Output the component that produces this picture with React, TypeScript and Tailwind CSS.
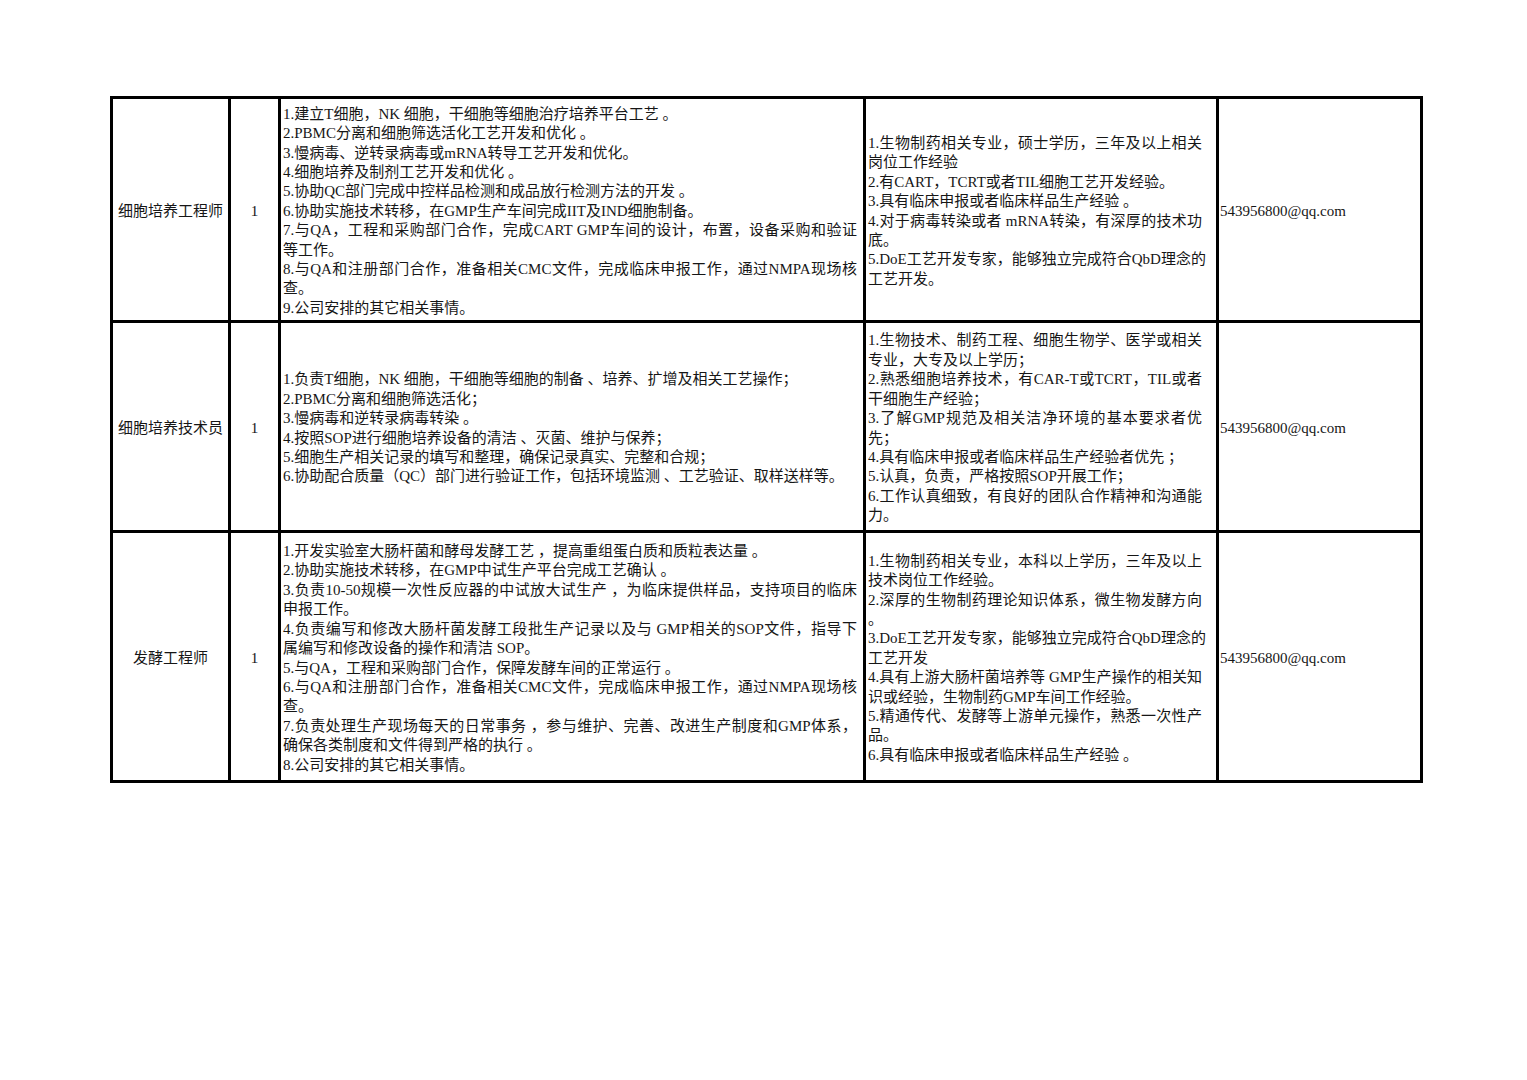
const rows = [
  {
    title: "细胞培养工程师",
    count: "1",
    duties: [
      ["1.建立T细胞，NK 细胞，干细胞等细胞治疗培养平台工艺 。"],
      ["2.PBMC分离和细胞筛选活化工艺开发和优化 。"],
      ["3.慢病毒、逆转录病毒或mRNA转导工艺开发和优化。"],
      ["4.细胞培养及制剂工艺开发和优化 。"],
      ["5.协助QC部门完成中控样品检测和成品放行检测方法的开发 。"],
      ["6.协助实施技术转移，在GMP生产车间完成IIT及IND细胞制备。"],
      ["7.与QA，工程和采购部门合作，完成CART GMP车间的设计，布置，设备采购和验证", "等工作。"],
      ["8.与QA和注册部门合作，准备相关CMC文件，完成临床申报工作，通过NMPA现场核", "查。"],
      ["9.公司安排的其它相关事情。"],
    ],
    reqs: [
      ["1.生物制药相关专业，硕士学历，三年及以上相关", "岗位工作经验"],
      ["2.有CART，TCRT或者TIL细胞工艺开发经验。"],
      ["3.具有临床申报或者临床样品生产经验 。"],
      ["4.对于病毒转染或者 mRNA转染，有深厚的技术功", "底。"],
      ["5.DoE工艺开发专家，能够独立完成符合QbD理念的", "工艺开发。"],
    ],
  },
  {
    title: "细胞培养技术员",
    count: "1",
    duties: [
      ["1.负责T细胞，NK 细胞，干细胞等细胞的制备 、培养、扩增及相关工艺操作；"],
      ["2.PBMC分离和细胞筛选活化；"],
      ["3.慢病毒和逆转录病毒转染 。"],
      ["4.按照SOP进行细胞培养设备的清洁 、灭菌、维护与保养；"],
      ["5.细胞生产相关记录的填写和整理，确保记录真实、完整和合规；"],
      ["6.协助配合质量（QC）部门进行验证工作，包括环境监测 、工艺验证、取样送样等。"],
    ],
    reqs: [
      ["1.生物技术、制药工程、细胞生物学、医学或相关", "专业，大专及以上学历；"],
      ["2.熟悉细胞培养技术，有CAR-T或TCRT，TIL或者", "干细胞生产经验；"],
      ["3.了解GMP规范及相关洁净环境的基本要求者优", "先；"],
      ["4.具有临床申报或者临床样品生产经验者优先 ；"],
      ["5.认真，负责，严格按照SOP开展工作；"],
      ["6.工作认真细致，有良好的团队合作精神和沟通能", "力。"],
    ],
  },
  {
    title: "发酵工程师",
    count: "1",
    duties: [
      ["1.开发实验室大肠杆菌和酵母发酵工艺 ，提高重组蛋白质和质粒表达量 。"],
      ["2.协助实施技术转移，在GMP中试生产平台完成工艺确认 。"],
      ["3.负责10-50规模一次性反应器的中试放大试生产 ，为临床提供样品，支持项目的临床", "申报工作。"],
      ["4.负责编写和修改大肠杆菌发酵工段批生产记录以及与 GMP相关的SOP文件，指导下", "属编写和修改设备的操作和清洁 SOP。"],
      ["5.与QA，工程和采购部门合作，保障发酵车间的正常运行 。"],
      ["6.与QA和注册部门合作，准备相关CMC文件，完成临床申报工作，通过NMPA现场核", "查。"],
      ["7.负责处理生产现场每天的日常事务 ，参与维护、完善、改进生产制度和GMP体系，", "确保各类制度和文件得到严格的执行 。"],
      ["8.公司安排的其它相关事情。"],
    ],
    reqs: [
      ["1.生物制药相关专业，本科以上学历，三年及以上", "技术岗位工作经验。"],
      ["2.深厚的生物制药理论知识体系，微生物发酵方向", "。"],
      ["3.DoE工艺开发专家，能够独立完成符合QbD理念的", "工艺开发"],
      ["4.具有上游大肠杆菌培养等 GMP生产操作的相关知", "识或经验，生物制药GMP车间工作经验。"],
      ["5.精通传代、发酵等上游单元操作，熟悉一次性产", "品。"],
      ["6.具有临床申报或者临床样品生产经验 。"],
    ],
  },
];

const email = "543956800@qq.com";

function Paragraphs({ items, justifyClass }: { items: string[][]; justifyClass: string }) {
  return (
    <div className="flex flex-col">
      {items.map((para, i) =>
        para.map((line, j) => (
          <div
            key={`${i}-${j}`}
            className={
              j < para.length - 1
                ? `whitespace-nowrap text-justify [text-align-last:justify] ${justifyClass}`
                : "whitespace-nowrap"
            }
          >
            {line}
          </div>
        ))
      )}
    </div>
  );
}

export default function App() {
  return (
    <div
      className="min-h-[1080px] bg-white pt-[96px] pl-[110px] text-[15px] leading-[19.4px] text-[#161616]"
      style={{ fontFamily: '"Liberation Serif", "Noto Sans CJK SC", serif' }}
    >
      <div className="grid w-fit grid-cols-[115px_47px_582px_350px_201px] grid-rows-[221px_207px_247px] gap-[3px] bg-black p-[3px]">
        {rows.map((row) => (
          <div key={row.title} className="contents">
            <div className="flex items-center justify-center bg-white pt-[5px]">{row.title}</div>
            <div className="flex items-center justify-center bg-white pt-[5px]">{row.count}</div>
            <div className="flex items-center bg-white pl-[2px] pt-[4px]">
              <Paragraphs items={row.duties} justifyClass="w-[574px]" />
            </div>
            <div className="flex items-center bg-white pl-[2px] pt-[4px]">
              <Paragraphs items={row.reqs} justifyClass="w-[334px]" />
            </div>
            <div className="flex items-center bg-white pl-[1px] pt-[5px]">{email}</div>
          </div>
        ))}
      </div>
    </div>
  );
}
